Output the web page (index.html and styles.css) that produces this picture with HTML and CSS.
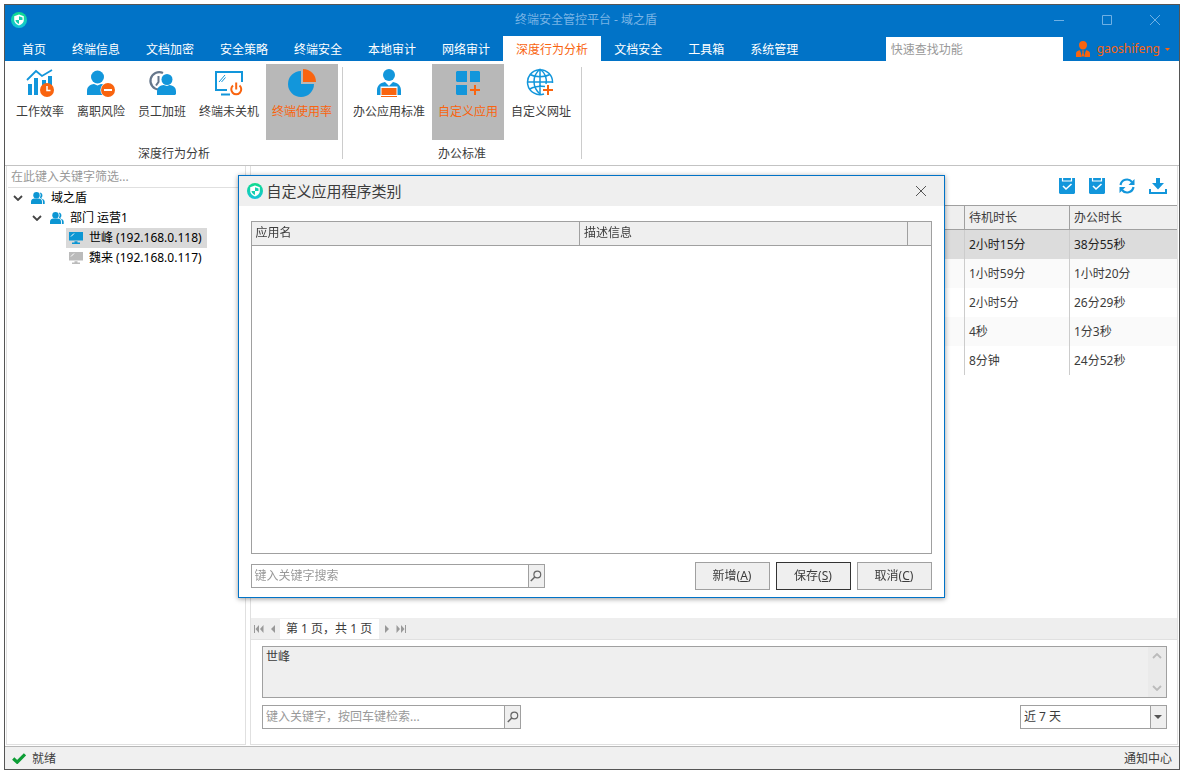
FILE: index.html
```html
<!DOCTYPE html>
<html lang="zh-CN">
<head>
<meta charset="utf-8">
<title>终端安全管控平台 - 域之盾</title>
<link rel="stylesheet" href="styles.css">
</head>
<body>
<svg class="defs" aria-hidden="true">
  <linearGradient id="brand" x1="0" y1="0" x2="0" y2="1"><stop offset="0" stop-color="#10dc8c"/><stop offset="1" stop-color="#15c3da"/></linearGradient>
  <symbol id="logo" viewBox="0 0 16 16">
    <circle cx="8" cy="8" r="8" fill="url(#brand)"/>
    <path d="M8 2.500 12.800 4.300V8c0 2.500-1.800 4.300-4.800 5.500C5 12.300 3.200 10.500 3.200 8V4.300z" fill="#fff"/>
    <path d="M8 4.300 11.500 5.400V8H8zM8 8v4C6 11 4.600 9.800 4.500 8z" fill="#14cfae"/>
  </symbol>
  <symbol id="people" viewBox="0 0 14 12">
    <circle cx="5.500" cy="3.200" r="3.200" fill="#0c96d3"/>
    <path d="M0 12V9.500C0 7.500 1.800 6.800 3.300 6.600h4.400C9.200 6.800 11 7.500 11 9.500V12z" fill="#0c96d3"/>
    <path d="M8.800.6a2.800 2.800 0 0 1 1.700 4.900l.2 1.200c1.800.4 3 1.400 3 3.100V12h-1.800V9.500c0-1.700-1-2.600-2.600-3.200L9 5.500a4.500 4.500 0 0 0-.2-4.900z" fill="#0c96d3"/>
  </symbol>
  <symbol id="monitor" viewBox="0 0 14 12">
    <path d="M0 0h14v8.500H0zM5.500 9.300h3v1.200H11V12H3v-1.500h2.500z" fill="currentColor"/>
    <path d="m2 4.500 3-3" stroke="#fff" stroke-width="1"/>
  </symbol>
  <symbol id="lens" viewBox="0 0 12 12">
    <circle cx="7.300" cy="4.500" r="3.400" fill="none" stroke="#666" stroke-width="1.200"/><path d="M4.800 7 .8 11" stroke="#666" stroke-width="1.500"/>
  </symbol>
  <symbol id="chevron" viewBox="0 0 10 6"><path d="m1 1 4 4 4-4" fill="none" stroke="currentColor" stroke-width="1.800"/></symbol>
  <symbol id="clip" viewBox="0 0 16 16">
    <path d="M0 0h16v15l-1 1H1l-1-1z" fill="#1296db"/><path d="M3.500 0v3h9V0" fill="none" stroke="#fff" stroke-width="1.200"/><path d="m4 8 3 3 5.500-5" fill="none" stroke="#fff" stroke-width="1.600"/>
  </symbol>
</svg>

<div class="window">
  <header class="titlebar">
    <svg class="logo"><use href="#logo"/></svg>
    <h1 class="window-title">终端安全管控平台 - 域之盾</h1>
    <div class="window-controls">
      <button aria-label="最小化"><svg viewBox="0 0 12 12"><path d="M1 6.500h10"/></svg></button>
      <button aria-label="最大化"><svg viewBox="0 0 12 12"><path d="M1.500 1.500h9v9h-9z"/></svg></button>
      <button aria-label="关闭"><svg viewBox="0 0 12 12"><path d="m1 1 10 10M11 1 1 11"/></svg></button>
    </div>
  </header>

  <nav class="menubar">
    <button class="tab">首页</button><button class="tab">终端信息</button><button class="tab">文档加密</button><button class="tab">安全策略</button><button class="tab">终端安全</button><button class="tab">本地审计</button><button class="tab">网络审计</button><button class="tab tab-active">深度行为分析</button><button class="tab">文档安全</button><button class="tab">工具箱</button><button class="tab">系统管理</button>
    <input class="quick-search" type="text" placeholder="快速查找功能" aria-label="快速查找功能">
    <button class="user">
      <svg class="user-icon" viewBox="0 0 14 16"><path d="M7 0c2.400 0 4 1.600 4 4S9.500 8.500 7 8.500 3 6.500 3 4s1.600-4 4-4zM0 16v-3.500C0 10.200 2 9.500 4 9.200L5.500 14v2zM14 16v-3.500c0-2.300-2-3-4-3.300L8.500 14v2zM6 9.500h2l-.5 1.500.8 4.500H5.700l.8-4.500z" fill="#f9640f"/></svg>
      gaoshifeng
      <svg class="user-caret" viewBox="0 0 5 3"><path d="M0 0h5L2.500 3z" fill="#f9640f"/></svg>
    </button>
  </nav>

  <section class="ribbon">
    <div class="ribbon-group">
      <div class="ribbon-buttons">
        <button class="tool">
          <svg viewBox="0 0 30 30"><path d="M3 16h4v11H3zM9 10h4v17H9zM17 12h4v15h-4zM23 8h4v14h-4z" fill="#1296db"/><path d="m2 12 9-9 6 5L27 2" fill="none" stroke="#1296db" stroke-width="1.800"/><circle cx="22" cy="22" r="7" fill="#f9640f"/><path d="M22 18v4.500h3.500" fill="none" stroke="#fff" stroke-width="1.500"/></svg>
          工作效率</button>
        <button class="tool">
          <svg viewBox="0 0 30 30"><circle cx="11.500" cy="9" r="6.500" fill="#1296db"/><path d="M1 27V23c0-5 4-6.500 7-7l3.500 1.500L15 16c4 .5 7.500 2.500 7.500 7v4z" fill="#1296db"/><circle cx="22" cy="22" r="7.600" fill="#fff"/><circle cx="22" cy="22" r="7" fill="#f9640f"/><path d="M18 22h8" stroke="#fff" stroke-width="2"/></svg>
          离职风险</button>
        <button class="tool">
          <svg viewBox="0 0 30 30"><path d="M12 21.500A8.700 8.700 0 1 1 16 5" fill="none" stroke="#66778b" stroke-width="2.200"/><path d="M11.500 8v6l-2.500 3.500" fill="none" stroke="#66778b" stroke-width="2"/><circle cx="20" cy="11.500" r="6.700" fill="#fff"/><circle cx="20" cy="11.500" r="5.500" fill="#1296db"/><path d="M10 27v-3.500c0-4.500 3.500-6 6.500-6.500l3.500 1 2.500-1c4 .5 6.500 2.500 6.500 6.500V26l-1 1z" fill="#1296db"/></svg>
          员工加班</button>
        <button class="tool">
          <svg viewBox="0 0 30 30"><path d="M13 22H2V4h26v10M7 26.500h9" fill="none" stroke="#1296db" stroke-width="2"/><path d="m5 14 6-7M7.500 14l4-4.500" stroke="#1296db"/><path d="M19 17.500a5 5 0 1 0 6.500 0M22.200 14.500v7" fill="none" stroke="#f9640f" stroke-width="2"/></svg>
          终端未关机</button>
        <button class="tool tool-active">
          <svg viewBox="0 0 30 30"><path d="M14 3a13 13 0 1 0 13 13H14z" fill="#1296db"/><path d="M16 1a13 13 0 0 1 13 13H16z" fill="#f9640f"/></svg>
          终端使用率</button>
      </div>
      <h2 class="ribbon-caption">深度行为分析</h2>
    </div>
    <div class="ribbon-group">
      <div class="ribbon-buttons">
        <button class="tool">
          <svg viewBox="0 0 30 30"><circle cx="15" cy="7" r="6" fill="#1296db"/><path d="M3 27v-4.500c0-5 3-7.500 8-8.500l4 4 4-4c5 1 8 3.500 8 8.500V27z" fill="#1296db"/><path d="M6.500 18.500h17V30h-17z" fill="#fff"/><path d="M7.500 20h15v7h-15zM7 28h16v1H7z" fill="#f9640f"/></svg>
          办公应用标准</button>
        <button class="tool tool-active">
          <svg viewBox="0 0 30 30"><path d="M4 3h10v11H4l-1-1V4zM17 3h9l1 1v10H17zM3 17h11v10H4l-1-1z" fill="#1296db"/><path d="M17 22h10M22 17v10" stroke="#f9640f" stroke-width="2"/></svg>
          自定义应用</button>
        <button class="tool">
          <svg viewBox="0 0 30 30"><g fill="none" stroke="#1296db" stroke-width="1.500"><path d="M18 26A12.500 12.500 0 1 1 26.500 15M14 1v25M1.500 14h25M4 6.500c5 3 15 3 20 0M4 21c4-2.500 9-3 15-2.500"/><path d="M14 1c-8 7-8 18 0 25M14 1c5 4 7 10 6 15"/></g><path d="M15.500 22.500h12.500M22 16v12" stroke="#fff" stroke-width="4"/><path d="M17 22h10M22 17v10" stroke="#f9640f" stroke-width="2"/></svg>
          自定义网址</button>
      </div>
      <h2 class="ribbon-caption">办公标准</h2>
    </div>
  </section>

  <main class="workspace">
    <aside class="sidebar">
      <input class="filter" type="text" placeholder="在此键入关键字筛选..." aria-label="筛选">
      <ul class="tree">
        <li><button class="node"><svg class="toggle"><use href="#chevron"/></svg><svg class="node-icon"><use href="#people"/></svg><span>域之盾</span></button>
          <ul>
            <li><button class="node"><svg class="toggle"><use href="#chevron"/></svg><svg class="node-icon"><use href="#people"/></svg><span>部门 运营1</span></button>
              <ul class="leaves">
                <li><button class="node node-selected"><svg class="node-icon online"><use href="#monitor"/></svg><span>世峰 (192.168.0.118)</span></button></li>
                <li><button class="node"><svg class="node-icon offline"><use href="#monitor"/></svg><span>魏来 (192.168.0.117)</span></button></li>
              </ul>
            </li>
          </ul>
        </li>
      </ul>
    </aside>

    <section class="content">
      <div class="toolbar">
        <button aria-label="选择"><svg><use href="#clip"/></svg></button>
        <button aria-label="全选"><svg><use href="#clip"/></svg></button>
        <button aria-label="刷新"><svg viewBox="0 0 16 16"><path d="M1.500 7A6.500 6.500 0 0 1 13 4M14.500 9A6.500 6.500 0 0 1 3 12" fill="none" stroke="#1296db" stroke-width="2.200"/><path d="M15.500 1v6H9.500zM.5 15V9h6z" fill="#1296db"/></svg></button>
        <button aria-label="下载"><svg class="wide" viewBox="0 0 18 16"><path d="M7 0h4v5h4l-6 6.500L3 5h4z" fill="#1296db"/><path d="M1 11v4h16v-4" fill="none" stroke="#1296db" stroke-width="2"/></svg></button>
      </div>
      <table class="records">
        <thead><tr><th></th><th class="col-idle">待机时长</th><th class="col-work">办公时长</th></tr></thead>
        <tbody>
          <tr class="row-selected"><td></td><td>2小时15分</td><td>38分55秒</td></tr>
          <tr><td></td><td>1小时59分</td><td>1小时20分</td></tr>
          <tr><td></td><td>2小时5分</td><td>26分29秒</td></tr>
          <tr><td></td><td>4秒</td><td>1分3秒</td></tr>
          <tr><td></td><td>8分钟</td><td>24分52秒</td></tr>
        </tbody>
      </table>
      <div class="pager">
        <button aria-label="第一页"><svg viewBox="0 0 10 8"><path d="M0 0h1v8H0zM5 0v8L1.500 4zM9.500 0v8L6 4z"/></svg></button>
        <button aria-label="上一页"><svg viewBox="0 0 10 8"><path d="M7 0v8L3 4z"/></svg></button>
        <span class="pager-text">第 1 页，共 1 页</span>
        <button aria-label="下一页"><svg viewBox="0 0 10 8"><path d="M3 0v8l4-4z"/></svg></button>
        <button aria-label="最后一页"><svg viewBox="0 0 10 8"><path d="M9 0h1v8H9zM.5 0v8L4 4zM5 0v8l3.500-4z"/></svg></button>
      </div>
      <div class="query">
        <div class="names">
          <textarea readonly aria-label="已选终端">世峰</textarea>
          <div class="scroll"><svg class="up"><use href="#chevron"/></svg><svg><use href="#chevron"/></svg></div>
        </div>
        <div class="query-row">
          <div class="search query-search"><input type="text" placeholder="键入关键字，按回车键检索..." aria-label="检索"><button aria-label="检索"><svg><use href="#lens"/></svg></button></div>
          <div class="range"><select aria-label="时间范围"><option>近 7 天</option></select><svg class="range-arrow" viewBox="0 0 8 4"><path d="M0 0h8L4 4z" fill="#555"/></svg></div>
        </div>
      </div>
    </section>
  </main>

  <footer class="statusbar">
    <svg viewBox="0 0 14 11"><path d="m1.200 5.500 4 3.700L13 1.300" fill="none" stroke="#0c9d35" stroke-width="3.200"/></svg>
    <span>就绪</span>
    <button class="notice">通知中心</button>
  </footer>
</div>

<div class="overlay">
  <section class="dialog" role="dialog" aria-labelledby="dialog-title">
    <header class="dialog-header">
      <svg class="logo"><use href="#logo"/></svg>
      <h2 id="dialog-title">自定义应用程序类别</h2>
      <button class="dialog-close" aria-label="关闭"><svg viewBox="0 0 12 12"><path d="m1 1 10 10M11 1 1 11"/></svg></button>
    </header>
    <div class="dialog-body">
      <div class="app-list">
        <table>
          <thead><tr><th>应用名</th><th>描述信息</th><th class="col-tail"></th></tr></thead>
        </table>
      </div>
      <div class="dialog-actions">
        <div class="search dialog-search"><input type="text" placeholder="键入关键字搜索" aria-label="键入关键字搜索"><button aria-label="搜索"><svg><use href="#lens"/></svg></button></div>
        <button class="push">新增(<u>A</u>)</button>
        <button class="push push-default">保存(<u>S</u>)</button>
        <button class="push">取消(<u>C</u>)</button>
      </div>
    </div>
  </section>
</div>
</body>
</html>
```
FILE: styles.css
```css
* { box-sizing: border-box; }
body {
  margin: 0;
  padding: 4px;
  height: 100vh;
  background: #fff;
  color: #3c3c3c;
  font: 12px/20px "Noto Sans", "Noto Sans CJK SC", sans-serif;
}
button, input, select, textarea {
  margin: 0;
  padding: 0;
  border: 0;
  border-radius: 0;
  background: none;
  color: inherit;
  font: inherit;
  outline: 0;
}
input::placeholder { color: #999; opacity: 1; }
h1, h2, ul { margin: 0; padding: 0; font: inherit; list-style: none; }
svg { display: block; flex: none; }
table { width: 100%; border-collapse: collapse; table-layout: fixed; }
th, td { text-align: left; font-weight: normal; }
.defs { position: absolute; width: 0; height: 0; }
.logo { width: 16px; height: 16px; }

.window { height: 100%; display: flex; flex-direction: column; border: 1px solid #555; }

.titlebar { display: grid; grid-template-columns: 1fr auto 1fr; align-items: center; height: 31px; flex: none; padding: 0 18px 2px 6px; background: #0173c7; }
.window-title { color: #79b4e5; }
.window-controls { display: flex; justify-content: flex-end; gap: 36px; }
.window-controls svg { width: 12px; height: 12px; fill: none; stroke: #6fb0e4; }

.menubar { display: flex; align-items: flex-end; height: 25px; flex: none; padding: 0 9px 0 4px; background: #0173c7; }
.tab { height: 25px; padding: 2px 13px 0; color: #fff; white-space: nowrap; }
.tab-active { background: #fff; color: #f9640f; }
.quick-search { width: 177px; height: 24px; margin-left: auto; padding: 0 5px; background: #fff; }
.user { display: flex; align-items: center; height: 24px; margin-left: 13px; color: #f9640f; }
.user-icon { width: 14px; height: 16px; margin-right: 7px; }
.user-caret { width: 5px; height: 3px; margin-left: 5px; }

.ribbon { display: flex; flex: none; height: 105px; padding: 3px 0 5px 1px; border-bottom: 1px solid #c3c3c3; background: #fff; }
.ribbon-group { position: relative; padding: 0 5px 0 4px; }
.ribbon-group::after { content: ""; position: absolute; right: 0; top: 3px; bottom: 1px; width: 1px; background: #ccc; }
.ribbon-buttons { display: flex; gap: 1px; }
.tool { display: flex; flex-direction: column; align-items: center; height: 76px; padding: 4px 6px; gap: 4px; white-space: nowrap; }
.tool svg { width: 30px; height: 30px; }
.tool-active { background: #b8b8b8; color: #f9640f; }
.ribbon-caption { padding-top: 4px; text-align: center; }

.workspace { flex: 1; min-height: 0; display: flex; gap: 4px; padding: 0 1px 1px; }
.sidebar { width: 240px; flex: none; padding-left: 1px; border: 1px solid #e0e0e0; border-top: 0; }
.filter { display: block; width: 100%; height: 22px; padding: 0 3px; border-bottom: 1px solid #e0e0e0; }
.tree { padding-left: 5px; color: #000; }
.tree ul { padding-left: 19px; }
.tree .leaves { padding-left: 34px; }
.node { display: flex; align-items: center; height: 20px; white-space: nowrap; }
.toggle { width: 10px; height: 6px; margin-right: 8px; color: #444; }
.node-icon { width: 14px; height: 12px; margin-right: 6px; }
.leaves .node { padding: 0 5px 0 3px; }
.leaves .node-selected { background: #d9d9d9; }
.online { color: #0c96d3; }
.offline { color: #bbb; }

.content { flex: 1; min-width: 0; display: flex; flex-direction: column; border: 1px solid #e0e0e0; border-top: 0; }
.toolbar { display: flex; justify-content: flex-end; gap: 14px; height: 39px; flex: none; align-items: center; padding: 0 10px 0 0; }
.toolbar svg { width: 16px; height: 16px; }
.toolbar .wide { width: 18px; }
.records { border-collapse: separate; border-spacing: 0; }
.records th { height: 25px; padding: 0 4px; border: solid #a0a0a0; border-width: 1px 0 1px 1px; background: #efefef; }
.records td { height: 29px; padding: 0 4px; border-left: 1px solid #ccc; }
.records th:first-child, .records td:first-child { border-left: 0; }
.records .col-idle { width: 105px; }
.records .col-work { width: 108px; }
.records tbody tr:nth-child(even) { background: #fafafa; }
.records .row-selected { background: #dcdcdc; color: #222; }

.pager { display: flex; align-items: center; height: 22px; flex: none; margin-top: auto; padding-left: 1px; border-bottom: 1px solid #e0e0e0; background: #eee; }
.pager button { padding: 0 2px; }
.pager svg { width: 10px; height: 8px; fill: #999; }
.pager-text { margin-right: 1px; padding: 0 7px 0 6px; background: #fff; }

.query { padding: 6px 10px 15px 11px; }
.names { display: flex; height: 52px; margin-bottom: 7px; border: 1px solid #a0a0a0; background: #efefef; }
.names textarea { flex: 1; padding: 0 3px; resize: none; line-height: 19px; }
.scroll { display: flex; flex-direction: column; justify-content: space-between; align-items: center; width: 18px; padding: 6px 0; background: #eaeaea; color: #bbb; }
.scroll svg { width: 10px; height: 6px; }
.scroll .up { transform: rotate(180deg); }
.query-row { display: flex; justify-content: space-between; }
.search { display: flex; height: 24px; border: 1px solid #a0a0a0; background: #fff; }
.search input { flex: 1; min-width: 0; padding: 0 3px; }
.search button { display: grid; place-items: center; width: 16px; border-left: 1px solid #a0a0a0; background: #efefef; }
.search svg { width: 12px; height: 12px; }
.query-search { width: 259px; }
.range { position: relative; width: 147px; height: 24px; border: 1px solid #a0a0a0; background: linear-gradient(#efefef, #efefef) right / 15px no-repeat; }
.range select { width: 100%; height: 100%; padding: 0 3px; appearance: none; }
.range::before { content: ""; position: absolute; right: 15px; top: 0; bottom: 0; width: 1px; background: #a0a0a0; }
.range-arrow { position: absolute; right: 4px; top: 9px; width: 8px; height: 4px; pointer-events: none; }

.statusbar { display: flex; align-items: center; flex: none; height: 23px; padding: 1px 7px 0; border-top: 1px solid #b8b8b8; background: #f0f0f0; }
.statusbar svg { width: 14px; height: 11px; margin-right: 6px; }
.notice { margin-left: auto; }

.overlay { position: fixed; inset: 0; display: grid; place-items: center; padding: 0 2px 2px 0; }
.dialog { width: min(707px, 94vw); border: 1px solid #0173c7; background: #fff; box-shadow: 0 1px 5px rgba(0, 0, 0, .4); }
.dialog-header { display: flex; align-items: center; height: 30px; padding: 0 17px 0 8px; gap: 4px; background: #efefef; font-size: 15px; }
.dialog-close { margin-left: auto; }
.dialog-close svg { width: 12px; height: 12px; fill: none; stroke: #555; }
.dialog-body { padding: 15px 12px 7px; }
.app-list { height: 333px; margin-bottom: 8px; border: 1px solid #a0a0a0; }
.app-list th { height: 24px; padding: 0 4px; border-bottom: 1px solid #a0a0a0; background: #efefef; }
.app-list th + th { border-left: 1px solid #a0a0a0; }
.app-list .col-tail { width: 23px; }
.dialog-actions { display: flex; align-items: center; gap: 6px; }
.dialog-search { width: 294px; margin-right: auto; }
.push { width: 75px; height: 28px; border: 1px solid #a0a0a0; background: #efefef; }
.push-default { border-color: #333; }
```
